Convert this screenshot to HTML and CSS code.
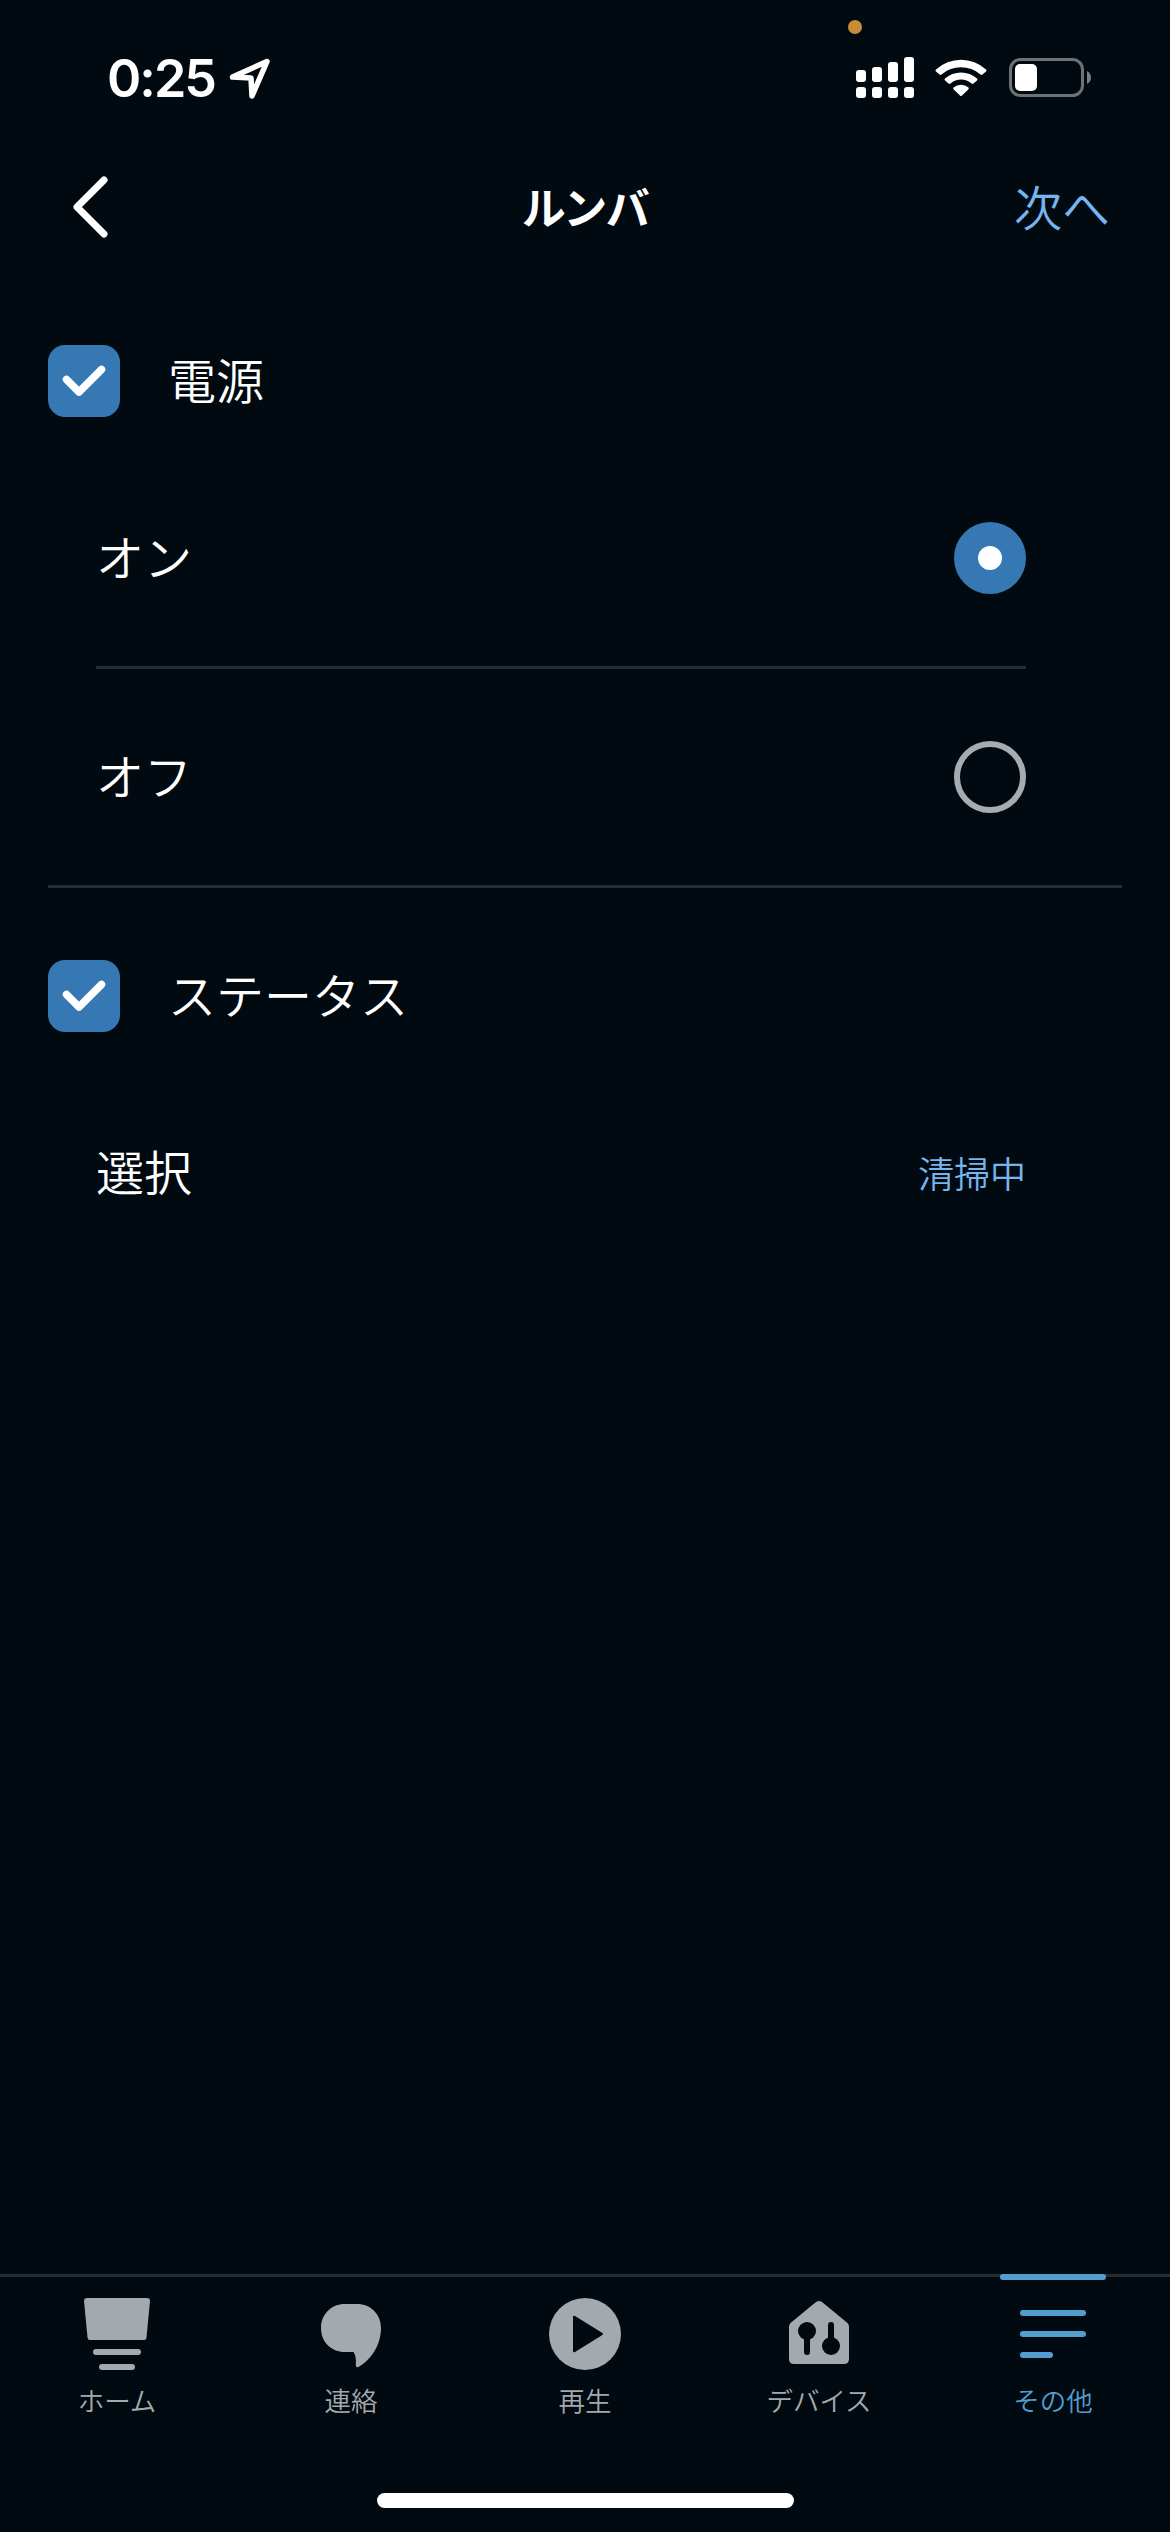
FILE: index.html
```html
<!DOCTYPE html>
<html lang="ja">
<head>
    <meta charset="UTF-8">
    <title>ルンバ</title>
    <link rel="stylesheet" href="styles.css">
</head>
<body>
    <div class="status">
        <span class="hora">0:25</span>
        <svg class="flecha" width="42" height="42" viewBox="0 0 42 42">
            <path d="M3.5 19 L38 3.5 L23 38 L22 20 Z" />
        </svg>
        <span class="punto"></span>
        <svg class="senal" width="58" height="42" viewBox="0 0 58 42">
            <rect x="0" y="14" width="10" height="12" rx="3" />
            <rect x="16" y="11" width="10" height="15" rx="3" />
            <rect x="32" y="6" width="10" height="20" rx="3" />
            <rect x="48" y="1" width="10" height="25" rx="3" />
            <rect x="0" y="31" width="10" height="11" rx="3" />
            <rect x="16" y="31" width="10" height="11" rx="3" />
            <rect x="32" y="31" width="10" height="11" rx="3" />
            <rect x="48" y="31" width="10" height="11" rx="3" />
        </svg>
        <svg class="wifi" width="52" height="38" viewBox="0 0 52 38">
            <path d="M1 10.5 Q0 11.5 1 12.5 L4.5 15.5 Q5.5 16.3 6.5 15.5 A29.5 29.5 0 0 1 45.5 15.5 Q46.5 16.3 47.5 15.5 L51 12.5 Q52 11.5 51 10.5 A37 37 0 0 0 1 10.5 Z" />
            <path d="M10 19.5 Q9 20.5 10 21.5 L13.5 24.5 Q14.5 25.3 15.5 24.5 A16 16 0 0 1 36.5 24.5 Q37.5 25.3 38.5 24.5 L42 21.5 Q43 20.5 42 19.5 A24 24 0 0 0 10 19.5 Z" />
            <path d="M18.5 28.5 Q17.8 29.5 18.7 30.5 L25 36.5 Q26 37.5 27 36.5 L33.3 30.5 Q34.2 29.5 33.5 28.5 A12 12 0 0 0 18.5 28.5 Z" />
        </svg>
        <svg class="bateria" width="83" height="40" viewBox="0 0 83 40">
            <rect class="bateria_borde" x="1.5" y="1.5" width="72" height="36" rx="10" />
            <rect x="6" y="6" width="22" height="27" rx="5" />
            <path class="bateria_punta" d="M78 13 Q82 15.5 82 19.5 Q82 23.5 78 26 Z" />
        </svg>
    </div>

    <div class="cabecera">
        <svg class="volver" width="42" height="66" viewBox="0 0 42 66">
            <path d="M34 6 L7 33 L34 60" />
        </svg>
        <h1 class="titulo">ルンバ</h1>
        <a class="siguiente">次へ</a>
    </div>

    <div class="contenido">
        <div class="grupo">
            <svg class="check" width="72" height="72" viewBox="0 0 72 72">
                <rect width="72" height="72" rx="17" />
                <path d="M18.5 34.5 L31 47 L53.5 24.5" />
            </svg>
            <span class="texto">電源</span>
        </div>
        <div class="fila linea">
            <span class="texto">オン</span>
            <span class="radio activo"></span>
        </div>
        <div class="fila">
            <span class="texto">オフ</span>
            <span class="radio"></span>
        </div>

        <div class="grupo separado">
            <svg class="check" width="72" height="72" viewBox="0 0 72 72">
                <rect width="72" height="72" rx="17" />
                <path d="M18.5 34.5 L31 47 L53.5 24.5" />
            </svg>
            <span class="texto">ステータス</span>
        </div>
        <div class="fila">
            <span class="texto">選択</span>
            <span class="valor">清掃中</span>
        </div>
    </div>

    <div class="menu">
        <div class="tab">
            <svg width="72" height="72" viewBox="0 0 72 72">
                <path d="M6 0 H66 Q69 0 69 3 L65.5 39.5 Q65.2 42 63 42 H9 Q6.8 42 6.5 39.5 L3 3 Q3 0 6 0 Z" />
                <rect x="12" y="51" width="48" height="6" rx="3" />
                <rect x="18" y="66" width="36" height="6" rx="3" />
            </svg>
            <span>ホーム</span>
        </div>
        <div class="tab">
            <svg width="72" height="72" viewBox="0 0 72 72">
                <path d="M30 6 H42 C56 6 66 16.5 66 30 C66 47 56 62 43.5 69 Q41 70 40.8 67.5 C41.3 61 40.5 57 38.5 54 H30 C16 54 6 44 6 30 C6 16.5 16 6 30 6 Z" />
            </svg>
            <span>連絡</span>
        </div>
        <div class="tab">
            <svg width="72" height="72" viewBox="0 0 72 72">
                <circle cx="36" cy="36" r="36" />
                <path class="hueco" d="M24 19 Q24 17 26 18 L53 34.8 Q55 36 53 37.2 L26 54 Q24 55 24 53 Z" />
            </svg>
            <span>再生</span>
        </div>
        <div class="tab">
            <svg width="72" height="72" viewBox="0 0 72 72">
                <path d="M33 4 Q36 2 39 4 L64.5 25 Q66 26.5 66 28.5 V61 Q66 66 61 66 H11 Q6 66 6 61 V28.5 Q6 26.5 7.5 25 Z" />
                <circle class="hueco" cx="24" cy="33" r="9" />
                <rect class="hueco" x="21" y="33" width="6" height="24" rx="3" />
                <circle class="hueco" cx="48" cy="48" r="9" />
                <rect class="hueco" x="45" y="24" width="6" height="24" rx="3" />
            </svg>
            <span>デバイス</span>
        </div>
        <div class="tab actual">
            <svg width="72" height="72" viewBox="0 0 72 72">
                <rect x="3" y="12" width="66" height="6" rx="3" />
                <rect x="3" y="33" width="66" height="6" rx="3" />
                <rect x="3" y="54" width="33" height="6" rx="3" />
            </svg>
            <span>その他</span>
        </div>
    </div>
    <div class="inicio"></div>
</body>
</html>
```

FILE: styles.css
```css
*{box-sizing: border-box;}

body{
    margin: 0;
    width: 1170px;
    height: 2532px;
    display: flex;
    flex-direction: column;
    background-color: #010a10;
    color: white;
    font-family: "Noto Sans CJK JP", sans-serif;
}

/* barra de estado */
.status{
    position: relative;
    height: 141px;
    padding: 56px 79px 0 107px;
    display: flex;
    align-items: flex-start;
    fill: white;
}

.hora{
    width: 122px;
    font-family: Inter, sans-serif;
    font-size: 52px;
    font-weight: 600;
    line-height: 45px;
    letter-spacing: -2px;
}

.flecha{
    margin-top: 2px;
    fill: none;
    stroke: white;
    stroke-width: 5.5px;
    stroke-linejoin: round;
}

.punto{
    position: absolute;
    left: 848px;
    top: 20px;
    width: 14px;
    height: 14px;
    border-radius: 50%;
    background-color: #c98d35;
}

.senal{margin-left: auto;}

.wifi{
    margin-left: 21px;
    margin-top: 3px;
}

.bateria{
    margin-left: 22px;
    margin-top: 2px;
    margin-right: -1px;
}

.bateria_borde{
    fill: none;
    stroke: #6d7276;
    stroke-width: 3px;
}

.bateria_punta{fill: #7b7f82;}

/* cabecera */
.cabecera{
    height: 132px;
    padding: 0 60px;
    display: grid;
    grid-template-columns: 1fr auto 1fr;
    align-items: center;
}

.volver{
    margin-left: 10px;
    fill: none;
    stroke: white;
    stroke-width: 7px;
    stroke-linecap: round;
    stroke-linejoin: round;
}

.titulo{
    margin: 0;
    padding-bottom: 3px;
    font-size: 44px;
    font-weight: bold;
    line-height: 60px;
    letter-spacing: -1.5px;
}

.siguiente{
    justify-self: end;
    padding-bottom: 5px;
    color: #76b5f0;
    font-size: 48px;
    font-weight: 350;
    line-height: 60px;
}

/* lista de opciones */
.contenido{flex: 1;}

.grupo{
    height: 138px;
    margin: 39px 48px 0;
    display: flex;
    align-items: center;
    gap: 48px;
}

.separado{
    height: 180px;
    margin-top: 0;
    padding-top: 39px;
    border-top: 3px solid #262d33;
}

.check rect{fill: #3578b3;}

.check path{
    fill: none;
    stroke: white;
    stroke-width: 7.5px;
    stroke-linecap: round;
    stroke-linejoin: round;
}

.texto{
    padding-bottom: 6px;
    font-size: 48px;
    font-weight: 350;
    line-height: 60px;
}

.fila{
    height: 216px;
    margin: 0 144px 0 96px;
    display: flex;
    align-items: center;
    justify-content: space-between;
}

.linea{
    height: 219px;
    border-bottom: 3px solid #262d33;
}

.radio{
    width: 72px;
    height: 72px;
    border: 6px solid #a7acb1;
    border-radius: 50%;
}

.activo{
    border: 24px solid #3578b3;
    background-color: white;
}

.valor{
    padding-bottom: 3px;
    color: #76b5f0;
    font-size: 36px;
    font-weight: 350;
    line-height: 48px;
}

/* menu inferior */
.menu{
    height: 219px;
    border-top: 3px solid #262d33;
    display: flex;
}

.tab{
    position: relative;
    flex: 1;
    padding-top: 21px;
    display: flex;
    flex-direction: column;
    align-items: center;
    color: #a4a9ad;
    fill: #a4a9ad;
    font-size: 26.5px;
    font-weight: 350;
    line-height: 32px;
}

.tab span{margin-top: 14px;}

.hueco{fill: #010a10;}

.actual{
    color: #529fcf;
    fill: #529fcf;
}

.actual::before{
    content: "";
    position: absolute;
    top: -3px;
    width: 106px;
    height: 6px;
    border-radius: 3px;
    background-color: #529fcf;
}

.inicio{
    width: 417px;
    height: 15px;
    margin: 0 auto 24px;
    border-radius: 8px;
    background-color: white;
}
```
